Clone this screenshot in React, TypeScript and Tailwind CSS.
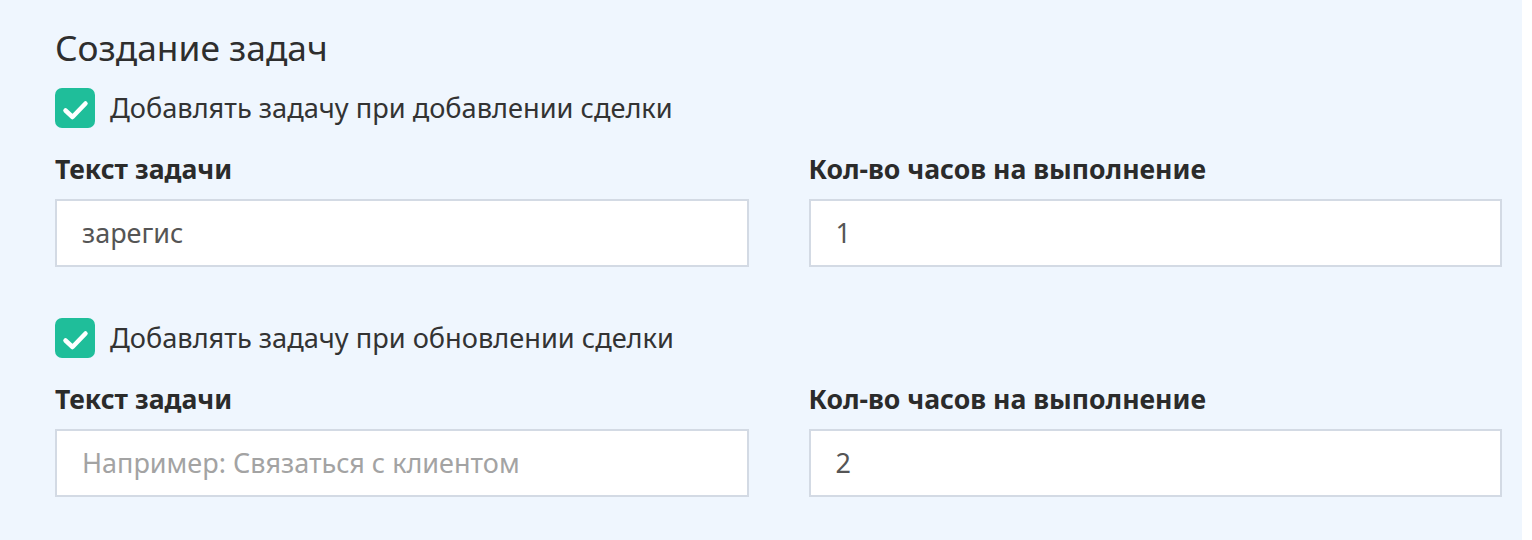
import React from "react";

const font = { fontFamily: '"Noto Sans", "Open Sans", sans-serif' };

function Check({ label }: { label: string }) {
  return (
    <label className="flex items-center gap-[15px]">
      <span className="flex h-[40px] w-[40px] shrink-0 items-center justify-center rounded-[7px] bg-[#1fbe9a]">
        <svg width="28" height="22" viewBox="0 0 28 22" fill="none" className="mt-[3px]">
          <path d="M4.5 11.5L11.5 18L24.5 4.5" stroke="white" strokeWidth="4.5" strokeLinecap="round" strokeLinejoin="round" />
        </svg>
      </span>
      <span className="text-[27.2px] leading-[32px] text-[#333]">{label}</span>
    </label>
  );
}

function Field({ label, value, placeholder }: { label: string; value?: string; placeholder?: string }) {
  return (
    <div className="flex flex-col">
      <div className="text-[26.6px] font-bold leading-[32px] text-[#2b2b2b]">{label}</div>
      <div className="mt-[14px] flex h-[68px] items-center border-2 border-[#d3dae4] bg-white px-[25px]">
        {value ? (
          <span className="text-[27px] text-[#555]">{value}</span>
        ) : (
          <span className="text-[27px] text-[#a3a3a3]">{placeholder}</span>
        )}
      </div>
    </div>
  );
}

export default function App() {
  return (
    <div className="h-[540px] w-[1532px] bg-white" style={font}>
      <div className="h-full w-[1522px] bg-[#eff6fe] pl-[55px] pr-[20px] pt-[24px]">
        <h2 className="text-[35.3px] leading-[46px] text-[#2e2e2e]">Создание задач</h2>
        <div className="mt-[18px]">
          <Check label="Добавлять задачу при добавлении сделки" />
        </div>
        <div className="mt-[25px] grid grid-cols-2 gap-[60px]">
          <Field label="Текст задачи" value="зарегис" />
          <Field label="Кол-во часов на выполнение" value="1" />
        </div>
        <div className="mt-[51px]">
          <Check label="Добавлять задачу при обновлении сделки" />
        </div>
        <div className="mt-[25px] grid grid-cols-2 gap-[60px]">
          <Field label="Текст задачи" placeholder="Например: Связаться с клиентом" />
          <Field label="Кол-во часов на выполнение" value="2" />
        </div>
      </div>
    </div>
  );
}
